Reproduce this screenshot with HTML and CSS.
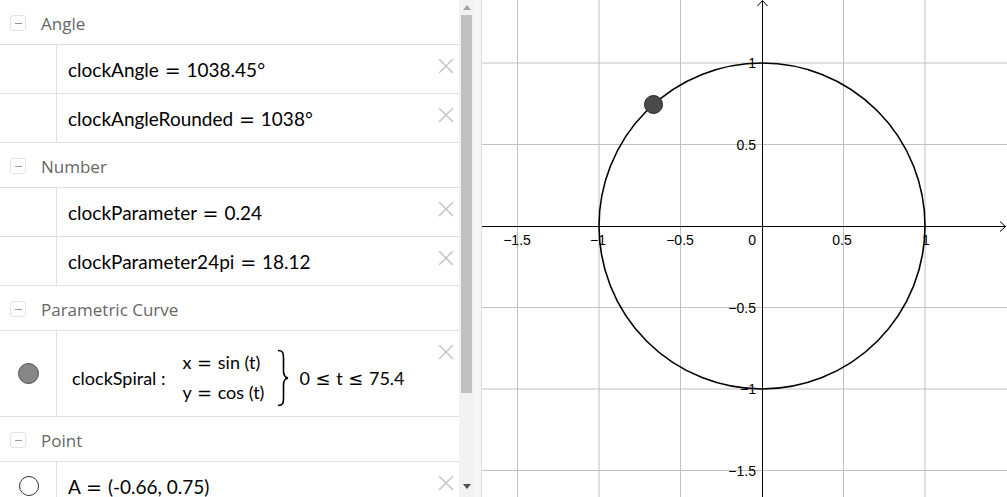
FILE: index.html
```html
<!DOCTYPE html>
<html>
<head>
<meta charset="utf-8">
<link rel="stylesheet" href="styles.css">
</head>
<body>
<div class="app">
  <div class="algebra">
    <div class="group">
      <span class="toggle"><span class="bar"></span></span>
      <span class="gname">Angle</span>
    </div>
    <div class="row">
      <div class="marble"></div>
      <div class="content"><span class="math">clockAngle <span class="eq">=</span> 1038.45°</span></div>
      <svg class="del" viewBox="0 0 16 16"><path d="M1 1L15 15M15 1L1 15"/></svg>
    </div>
    <div class="row">
      <div class="marble"></div>
      <div class="content"><span class="math">clockAngleRounded <span class="eq">=</span> 1038°</span></div>
      <svg class="del" viewBox="0 0 16 16"><path d="M1 1L15 15M15 1L1 15"/></svg>
    </div>
    <div class="group">
      <span class="toggle"><span class="bar"></span></span>
      <span class="gname">Number</span>
    </div>
    <div class="row">
      <div class="marble"></div>
      <div class="content"><span class="math">clockParameter <span class="eq">=</span> 0.24</span></div>
      <svg class="del" viewBox="0 0 16 16"><path d="M1 1L15 15M15 1L1 15"/></svg>
    </div>
    <div class="row">
      <div class="marble"></div>
      <div class="content"><span class="math">clockParameter24pi <span class="eq">=</span> 18.12</span></div>
      <svg class="del" viewBox="0 0 16 16"><path d="M1 1L15 15M15 1L1 15"/></svg>
    </div>
    <div class="group">
      <span class="toggle"><span class="bar"></span></span>
      <span class="gname">Parametric Curve</span>
    </div>
    <div class="row tall">
      <div class="marble"><span class="dot filled"></span></div>
      <div class="content curve">
        <span class="math small">clockSpiral :</span>
        <span class="cases">
          <span class="math small">x <span class="eq">=</span> sin (t)</span>
          <span class="math small">y <span class="eq">=</span> cos (t)</span>
        </span>
        <svg class="brace" viewBox="0 0 12 58"><path d="M1 1.5C6 1.5 6.5 4 6.5 9L6.5 22C6.5 27 8 28.5 11 29C8 29.5 6.5 31 6.5 36L6.5 49C6.5 54 6 56.5 1 56.5"/></svg>
        <span class="math small">0 <span class="eq">≤</span> t <span class="eq">≤</span> 75.4</span>
      </div>
      <svg class="del" viewBox="0 0 16 16"><path d="M1 1L15 15M15 1L1 15"/></svg>
    </div>
    <div class="group">
      <span class="toggle"><span class="bar"></span></span>
      <span class="gname">Point</span>
    </div>
    <div class="row">
      <div class="marble"><span class="dot"></span></div>
      <div class="content"><span class="math">A <span class="eq">=</span> (-0.66, 0.75)</span></div>
      <svg class="del" viewBox="0 0 16 16"><path d="M1 1L15 15M15 1L1 15"/></svg>
    </div>
  </div>
  <div class="scrollbar">
    <span class="arrow up"></span>
    <div class="thumb"></div>
    <span class="arrow down"></span>
  </div>
  <div class="splitter"></div>
  <div class="graphics">
    <svg class="plot" width="525" height="497" viewBox="482 0 525 497">
      <g class="grid">
        <line x1="517.5" y1="0" x2="517.5" y2="497"/>
        <line x1="599" y1="0" x2="599" y2="497"/>
        <line x1="680.5" y1="0" x2="680.5" y2="497"/>
        <line x1="843.5" y1="0" x2="843.5" y2="497"/>
        <line x1="925" y1="0" x2="925" y2="497"/>
        <line x1="482" y1="63" x2="1007" y2="63"/>
        <line x1="482" y1="144.5" x2="1007" y2="144.5"/>
        <line x1="482" y1="307.5" x2="1007" y2="307.5"/>
        <line x1="482" y1="389" x2="1007" y2="389"/>
        <line x1="482" y1="470.5" x2="1007" y2="470.5"/>
      </g>
      <g class="axes">
        <line x1="482" y1="226.5" x2="1006" y2="226.5"/>
        <line x1="762.5" y1="1" x2="762.5" y2="497"/>
        <polyline points="1000,221.5 1005.5,226.5 1000,231.5"/>
        <polyline points="757.5,6 762.5,0.5 767.5,6"/>
      </g>
      <g class="labels">
        <text x="517" y="245" text-anchor="middle">−1.5</text>
        <text x="598" y="245" text-anchor="middle">−1</text>
        <text x="680" y="245" text-anchor="middle">−0.5</text>
        <text x="756" y="245" text-anchor="end">0</text>
        <text x="842" y="245" text-anchor="middle">0.5</text>
        <text x="926" y="245" text-anchor="middle">1</text>
        <text x="756" y="68" text-anchor="end">1</text>
        <text x="756" y="150" text-anchor="end">0.5</text>
        <text x="756" y="313" text-anchor="end">−0.5</text>
        <text x="756" y="394" text-anchor="end">−1</text>
        <text x="756" y="476" text-anchor="end">−1.5</text>
      </g>
      <circle class="curve-line" cx="762" cy="226" r="163"/>
      <circle class="pointA" cx="653.5" cy="104.5" r="9"/>
    </svg>
  </div>
</div>
</body>
</html>
```

FILE: styles.css
```css
html, body {
  margin: 0;
  padding: 0;
  background: #ffffff;
  overflow: hidden;
}

.app {
  display: flex;
  width: 1007px;
  height: 497px;
  overflow: hidden;
}

.algebra {
  width: 459px;
  flex: none;
  height: 497px;
  overflow: hidden;
  background: #fff;
}

.group {
  display: flex;
  align-items: center;
  height: 44px;
  border-bottom: 1px solid #e0e0e0;
  font-family: "Open Sans", sans-serif;
  font-size: 17px;
  color: #666;
}

.toggle {
  display: flex;
  align-items: center;
  justify-content: center;
  width: 14px;
  height: 14px;
  margin-left: 10px;
  margin-right: 15px;
  margin-top: 2px;
  border: 1px solid #e3e3e3;
  border-radius: 3px;
}

.toggle .bar {
  width: 7px;
  height: 1px;
  background: #9a9a9a;
}

.gname {
  line-height: 1;
  margin-top: 2px;
}

.row {
  display: flex;
  height: 48px;
  border-bottom: 1px solid #e0e0e0;
}

.row.tall {
  height: 85px;
}

.marble {
  width: 56px;
  flex: none;
  border-right: 1px solid #e0e0e0;
  display: flex;
  align-items: center;
  justify-content: center;
}

.dot {
  width: 18px;
  height: 18px;
  border-radius: 50%;
  border: 1px solid #333;
  background: #fff;
  margin-left: 1px;
}

.dot.filled {
  width: 19px;
  height: 19px;
  background: #878787;
  border-color: #4a4a4a;
}

.content {
  flex: 1;
  display: flex;
  align-items: center;
  padding-left: 11px;
  font-family: "Lato", sans-serif;
  font-size: 19px;
  color: #000;
}

.math {
  white-space: nowrap;
}

.eq {
  font-family: "DejaVu Sans", sans-serif;
  margin: 0 1px;
}

.content.curve {
  padding-left: 15px;
  padding-top: 8px;
}

.math.small {
  font-size: 18px;
}

.cases {
  display: flex;
  flex-direction: column;
  gap: 9px;
  margin-left: 17px;
  line-height: 21px;
}

.brace {
  width: 12px;
  height: 58px;
  margin: 0 10px 0 13px;
  fill: none;
  stroke: #000;
  stroke-width: 1.6;
}

.del {
  width: 16px;
  height: 16px;
  flex: none;
  margin: 13px 5px 0 0;
  fill: none;
  stroke: #c4c4c4;
  stroke-width: 1.5;
}

.scrollbar {
  width: 15px;
  flex: none;
  background: #f1f1f1;
  display: flex;
  flex-direction: column;
  align-items: center;
}

.arrow {
  width: 0;
  height: 0;
  border-left: 4px solid transparent;
  border-right: 4px solid transparent;
}

.arrow.up {
  border-bottom: 5px solid #a3a3a3;
  margin-top: 5px;
}

.arrow.down {
  border-top: 5px solid #505050;
  margin-top: 91px;
}

.thumb {
  width: 11px;
  height: 378px;
  margin-top: 5px;
  background: #c1c1c1;
}

.splitter {
  width: 7px;
  flex: none;
  background: #f6f6f6;
  border-right: 1px solid #dcdcdc;
}

.graphics {
  flex: 1;
  background: #fff;
  overflow: hidden;
}

.plot {
  display: block;
}

.grid line {
  stroke: #c0c0c0;
  stroke-width: 1;
}

.axes line, .axes polyline {
  stroke: #000;
  stroke-width: 1;
  fill: none;
}

.labels text {
  font-family: "Liberation Sans", Arial, sans-serif;
  font-size: 14px;
  fill: #000;
}

.curve-line {
  fill: none;
  stroke: #000;
  stroke-width: 1.6;
}

.pointA {
  fill: #4a4a4a;
  stroke: #222;
  stroke-width: 1;
}
```
